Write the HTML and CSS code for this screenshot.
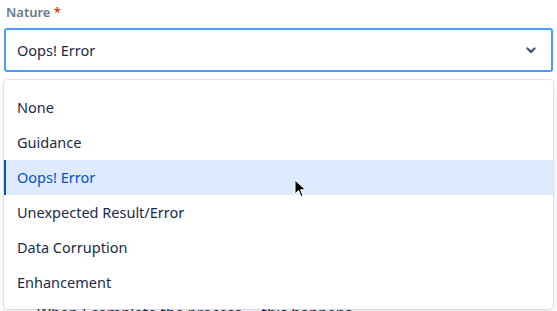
FILE: index.html
```html
<!DOCTYPE html>
<html lang="en">
<head>
    <meta charset="UTF-8">
    <title>Nature select</title>
    <link rel="stylesheet" href="styles.css">
</head>
<body>
    <div class="field">
        <label class="field-label">Nature <span class="required">*</span></label>
        <div class="select">
            <span class="select-value">Oops! Error</span>
            <svg class="chevron" width="12" height="12" viewBox="0 0 12 12">
                <path d="M2.5 4.5 L6 8 L9.5 4.5" fill="none" stroke="#42526e" stroke-width="2.2" stroke-linecap="round" stroke-linejoin="round"/>
            </svg>
        </div>
        <ul class="menu">
            <li class="option">None</li>
            <li class="option">Guidance</li>
            <li class="option selected">Oops! Error</li>
            <li class="option">Unexpected Result/Error</li>
            <li class="option">Data Corruption</li>
            <li class="option">Enhancement</li>
        </ul>
        <p class="description">When I complete the process ... this happens</p>
    </div>

    <!-- mouse pointer -->
    <svg class="pointer" width="14" height="20" viewBox="0 0 14 20">
        <path d="M1 1 L1 15 L4.5 11.5 L7 17.5 L9 16.6 L6.6 10.8 L11.5 10.8 Z" fill="#000" stroke="#fff" stroke-width="1"/>
    </svg>
</body>
</html>
```

FILE: styles.css
```css
body {
    margin: 0;
    background: #fff;
    font-family: 'Noto Sans', 'Open Sans', sans-serif;
    color: #172b4d;
}
.field {
    position: relative;
    padding: 4px 4px 0 4px;
}
.field-label {
    display: block;
    font-size: 13px;
    font-weight: 600;
    color: #6b778c;
    padding-left: 2px;
    height: 24px;
    line-height: 17px;
}
.required {
    color: #de350b;
}
.select {
    height: 40px;
    border: 2px solid #4c9aff;
    border-radius: 3px;
    display: flex;
    align-items: center;
    justify-content: space-between;
    padding: 0 14px 0 11px;
}
.select-value {
    font-size: 14.5px;
}
.chevron {
    display: block;
}
.menu {
    position: absolute;
    top: 80px;
    left: 4px;
    right: 4px;
    margin: 0;
    padding: 10px 0 9px 0;
    list-style: none;
    background: #fff;
    border-radius: 4px;
    box-shadow: 0 0 0 1px rgba(9, 30, 66, 0.1), 0 4px 11px rgba(9, 30, 66, 0.1);
    z-index: 2;
}
.option {
    height: 35px;
    line-height: 35px;
    padding-left: 11px;
    font-size: 14.5px;
    border-left: 2px solid transparent;
}
.option.selected {
    background: #deebff;
    border-left-color: #0052cc;
    color: #0052cc;
}
.description {
    margin: 0;
    padding: 230px 0 0 33px;
    font-size: 15px;
    line-height: 20px;
}
.pointer {
    position: absolute;
    left: 294px;
    top: 179px;
    z-index: 3;
}
```
